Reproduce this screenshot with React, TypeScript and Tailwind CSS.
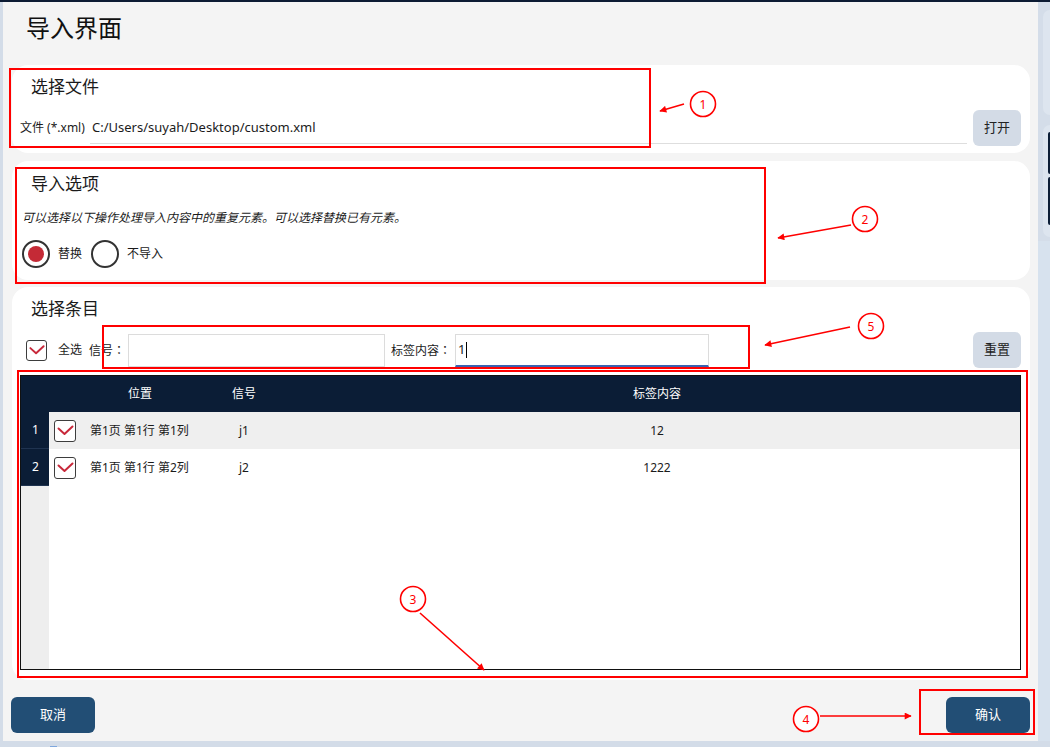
import React from "react";

function Check({ size }: { size: number }) {
  const cls =
    size === 22
      ? "w-[22px] h-[22px] rounded-[3px] border-[1.5px] border-[#3d3d3d]"
      : "w-[21px] h-[21px] rounded-[3px] border-[1.5px] border-[#3d3d3d]";
  return (
    <span className={`flex shrink-0 items-center justify-center bg-white ${cls}`}>
      <svg width={size - 3} height={size - 3} viewBox="0 0 19 19">
        <polyline
          points="2.5,7.5 8.5,13 16.5,5.5"
          fill="none"
          stroke="#c8283a"
          strokeWidth="2"
          strokeLinecap="round"
          strokeLinejoin="round"
        />
      </svg>
    </span>
  );
}

function Radio({ on }: { on: boolean }) {
  return (
    <span className="flex h-[28px] w-[28px] shrink-0 items-center justify-center rounded-full border-[2.5px] border-[#333]">
      {on && <span className="h-[16px] w-[16px] rounded-full bg-[#c42a36]" />}
    </span>
  );
}

const rows = [
  { n: "1", pos: "第1页 第1行 第1列", sig: "j1", val: "12", bg: "bg-[#efefef]" },
  { n: "2", pos: "第1页 第1行 第2列", sig: "j2", val: "1222", bg: "bg-white" },
];

function Overlay() {
  const red = "#ff0000";
  const circles: [number, number, string][] = [
    [703, 104, "1"],
    [865, 219, "2"],
    [413, 599, "3"],
    [806, 719, "4"],
    [871, 326, "5"],
  ];
  const arrows: [number, number, number, number][] = [
    [684, 104, 660, 111],
    [851, 225, 778, 238],
    [420, 613, 484, 670],
    [820, 716, 911, 716],
    [850, 327, 765, 345],
  ];
  return (
    <svg
      className="pointer-events-none absolute left-0 top-0"
      width="1050"
      height="747"
      viewBox="0 0 1050 747"
    >
      <defs>
        <marker
          id="ah"
          viewBox="0 0 10 10"
          refX="9"
          refY="5"
          markerWidth="9"
          markerHeight="7"
          markerUnits="userSpaceOnUse"
          orient="auto"
        >
          <path d="M0,0 L10,5 L0,10 z" fill={red} />
        </marker>
      </defs>
      <g fill="none" stroke={red} strokeWidth="2">
        <rect x="10" y="69" width="640" height="78" />
        <rect x="16" y="168" width="749" height="115" />
        <rect x="18" y="371" width="1009" height="306" />
        <rect x="920" y="690" width="114" height="44" />
        <rect x="103" y="326" width="646" height="42" />
      </g>
      {circles.map(([cx, cy, t]) => (
        <g key={t}>
          <circle cx={cx} cy={cy} r="12.5" fill="white" stroke={red} strokeWidth="1.6" />
          <text
            x={cx}
            y={cy + 4.5}
            textAnchor="middle"
            fontSize="12"
            fill={red}
            fontFamily="Noto Sans, sans-serif"
          >
            {t}
          </text>
        </g>
      ))}
      {arrows.map(([x1, y1, x2, y2], i) => (
        <line
          key={i}
          x1={x1}
          y1={y1}
          x2={x2}
          y2={y2}
          stroke={red}
          strokeWidth="1.6"
          markerEnd="url(#ah)"
        />
      ))}
    </svg>
  );
}

export default function App() {
  return (
    <div className="relative h-[747px] w-[1050px] overflow-hidden bg-[#f4f4f4] font-['Noto_Sans','Noto_Sans_CJK_SC',sans-serif] text-[#1b1b1b]">
      <div className="h-[2px] bg-[#0c1b33]" />
      <div className="flex h-[739px]">
        <div className="w-[3px] bg-[#d3dce8]" />
        <main className="flex w-[1035px] flex-col">
          <div className="h-[63px] pl-[23px] pt-[10px] text-[24px] leading-[32px] text-[#111]">
            导入界面
          </div>

          {/* Card 1 */}
          <section className="ml-[9px] h-[88px] w-[1018px] rounded-[16px] bg-white pl-[8px] pr-[9px] pt-[10px]">
            <div className="ml-[11px] text-[17px] leading-[24px]">选择文件</div>
            <div className="mt-[11px] flex h-[36px] items-start">
              <div className="flex h-[36px] w-[70px] items-center text-[12px]">文件 (*.xml)</div>
              <div className="flex h-[34px] flex-1 items-center border-b border-[#dedede] pl-[2px] pt-[3px] text-[13px]">
                C:/Users/suyah/Desktop/custom.xml
              </div>
              <button className="ml-[6px] flex h-[36px] w-[48px] items-center justify-center rounded-[6px] bg-[#d3dbe6] text-[13px] text-[#222]">
                打开
              </button>
            </div>
          </section>

          {/* Card 2 */}
          <section className="ml-[9px] mt-[8px] h-[119px] w-[1018px] rounded-[16px] bg-white px-[10px] pt-[11px]">
            <div className="ml-[9px] text-[17px] leading-[24px]">导入选项</div>
            <div className="mt-[13px] text-[12px] italic leading-[18px]">
              可以选择以下操作处理导入内容中的重复元素。可以选择替换已有元素。
            </div>
            <div className="mt-[13px] flex h-[28px] items-center text-[12px]">
              <Radio on />
              <span className="ml-[8px] w-[33px]">替换</span>
              <Radio on={false} />
              <span className="ml-[8px]">不导入</span>
            </div>
          </section>

          {/* Card 3 */}
          <section className="ml-[9px] mt-[7px] flex h-[393px] w-[1018px] flex-col rounded-[16px] bg-white pl-[8px] pr-[9px] pt-[10px]">
            <div className="ml-[11px] text-[17px] leading-[24px]">选择条目</div>
            <div className="mt-[11px] flex h-[36px] items-center text-[12px]">
              <span className="ml-[6px]">
                <Check size={21} />
              </span>
              <span className="ml-[11px] w-[31px]">全选</span>
              <span className="w-[39px] font-['Noto_Sans_CJK_TC',sans-serif]">信号：</span>
              <div className="h-[33px] w-[257px] border border-[#dcdcdc] bg-white" />
              <span className="ml-[6px] w-[64px] font-['Noto_Sans_CJK_TC',sans-serif]">标签内容：</span>
              <div className="flex h-[33px] w-[254px] items-center border border-b-2 border-[#dcdcdc] border-b-[#3a62b0] bg-white pl-[2px] text-[13px]">
                1<span className="ml-[1px] inline-block h-[16px] w-[1px] bg-black" />
              </div>
              <div className="flex-1" />
              <button className="flex h-[36px] w-[48px] items-center justify-center rounded-[6px] bg-[#d3dbe6] text-[13px] text-[#222]">
                重置
              </button>
            </div>

            <div className="mt-[7px] flex h-[295px] flex-col border border-[#111] text-[12px]">
              <div className="flex h-[36px] shrink-0 items-center bg-[#0b1d36] text-white">
                <div className="w-[28px]" />
                <div className="w-[33px]" />
                <div className="w-[116px] text-center">位置</div>
                <div className="w-[92px] text-center">信号</div>
                <div className="flex-1 pl-[4px] text-center">标签内容</div>
              </div>
              {rows.map((r) => (
                <div key={r.n} className={`flex h-[37px] shrink-0 items-center ${r.bg}`}>
                  <div className="flex h-full w-[28px] items-center justify-center border-b border-[#1f3350] bg-[#0b1d36] pl-[1px] text-white">
                    {r.n}
                  </div>
                  <div className="flex w-[33px] pl-[5px]">
                    <Check size={22} />
                  </div>
                  <div className="w-[116px] pl-[8px]">{r.pos}</div>
                  <div className="w-[92px] text-center">{r.sig}</div>
                  <div className="flex-1 pl-[4px] text-center">{r.val}</div>
                </div>
              ))}
              <div className="flex flex-1">
                <div className="w-[28px] bg-[#eeeeee]" />
                <div className="flex-1 bg-white" />
              </div>
            </div>
          </section>

          <div className="mt-[17px] flex h-[36px] items-center justify-between pl-[8px] pr-[8px] text-[13px] text-white">
            <button className="flex h-[36px] w-[84px] items-center justify-center rounded-[6px] bg-[#224e75]">
              取消
            </button>
            <button className="flex h-[36px] w-[84px] items-center justify-center rounded-[6px] bg-[#224e75]">
              确认
            </button>
          </div>
        </main>
        <aside className="flex w-[12px] flex-col bg-[#d4dde9] pl-[5px] pt-[8px]">
          <div className="h-[105px] rounded-l-[8px] bg-[#dde5ef]" />
          <div className="mt-[10px] h-[112px] rounded-l-[8px] bg-[#dde5ef] pl-[5px] pt-[7px]">
            <div className="h-[42px] rounded-l-[6px] bg-[#0b1d36]" />
            <div className="mt-[3px] h-[48px] rounded-l-[6px] bg-[#0b1d36]" />
          </div>
          <div className="-ml-[5px] mt-[4px] flex-1 bg-[#d7e2ee]" />
        </aside>
      </div>
      <div className="relative h-[6px] bg-[#d3dce8]">
        <div className="absolute left-[50px] top-[5px] h-[1px] w-[7px] bg-[#7ea7dd]" />
      </div>
      <Overlay />
    </div>
  );
}
